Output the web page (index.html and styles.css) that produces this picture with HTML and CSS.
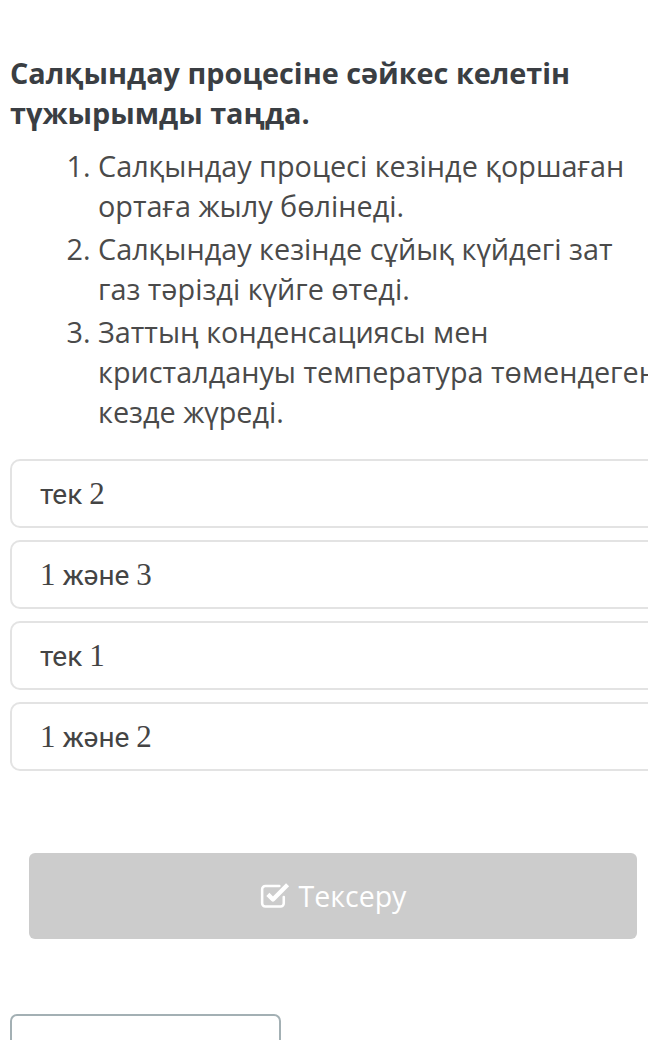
FILE: index.html
```html
<!DOCTYPE html>
<html lang="kk">
<head>
    <meta charset="UTF-8">
    <meta name="viewport" content="width=device-width, initial-scale=1.0">
    <title>Тапсырма</title>
    <link rel="stylesheet" href="styles.css">
</head>
<body>
    <div class="task">
        <h2 class="question">Салқындау процесіне сәйкес келетін түжырымды таңда.</h2>

        <ol class="statements">
            <li>Салқындау процесі кезінде қоршаған ортаға жылу бөлінеді.</li>
            <li>Салқындау кезінде сұйық күйдегі зат газ тәрізді күйге өтеді.</li>
            <li>Заттың конденсациясы мен кристалдануы температура төмендеген кезде жүреді.</li>
        </ol>

        <!-- Жауап нұсқалары -->
        <div class="answers">
            <div class="answer"><span>тек <span class="num">2</span></span></div>
            <div class="answer"><span><span class="num">1</span> және <span class="num">3</span></span></div>
            <div class="answer"><span>тек <span class="num">1</span></span></div>
            <div class="answer"><span><span class="num">1</span> және <span class="num">2</span></span></div>
        </div>

        <div class="check-row">
            <button class="check-button" type="button" disabled>
                <svg class="check-icon" viewBox="0 0 24 22" width="31" height="28" aria-hidden="true">
                    <path d="M18.5 12.5v5a2.5 2.5 0 0 1-2.5 2.5H4a2.5 2.5 0 0 1-2.5-2.5v-11A2.5 2.5 0 0 1 4 4h11" fill="none" stroke="#fff" stroke-width="2" stroke-linecap="round"/>
                    <path d="M6 10.5l4 4L21.5 3" fill="none" stroke="#fff" stroke-width="3.4" stroke-linejoin="round"/>
                </svg>
                <span>Тексеру</span>
            </button>
        </div>

        <div class="next-box"></div>
    </div>
</body>
</html>
```

FILE: styles.css
```css
body {
    margin: 0;
    padding: 0;
    background: #fff;
    font-family: 'Open Sans', 'Noto Sans', sans-serif;
    overflow: hidden;
}

.task {
    width: 652px;
    padding: 53px 0 0 10px;
}

.question {
    margin: 0;
    font-size: 28.8px;
    line-height: 40px;
    font-weight: 700;
    color: #3a3e43;
    width: 600px;
}

.statements {
    margin: 13px 0 0;
    padding-left: 88px;
    font-size: 28.8px;
    line-height: 40px;
    color: #4a4a4a;
}

.statements li {
    margin-bottom: 3px;
}

.answers {
    margin-top: 27px;
    display: flex;
    flex-direction: column;
    gap: 12px;
}

.answer {
    height: 65px;
    border: 2px solid #e3e3e3;
    border-radius: 10px;
    padding: 0 28px;
    display: flex;
    align-items: center;
    font-family: Roboto, 'Noto Sans', sans-serif;
    font-size: 28px;
    color: #444;
}

.answer .num {
    font-family: 'Liberation Serif', serif;
    font-size: 31px;
}

.check-row {
    margin-top: 82px;
    padding-left: 19px;
}

.check-button {
    width: 608px;
    height: 86px;
    border: none;
    border-radius: 6px;
    background-color: #cccccc;
    color: #fff;
    font-family: 'Open Sans', sans-serif;
    font-size: 28.5px;
    display: flex;
    align-items: center;
    justify-content: center;
    gap: 8px;
}

.check-icon {
    margin-top: -2px;
}

.next-box {
    margin-top: 75px;
    width: 267px;
    height: 60px;
    border: 2px solid #a3b0b4;
    border-radius: 7px;
}
```
